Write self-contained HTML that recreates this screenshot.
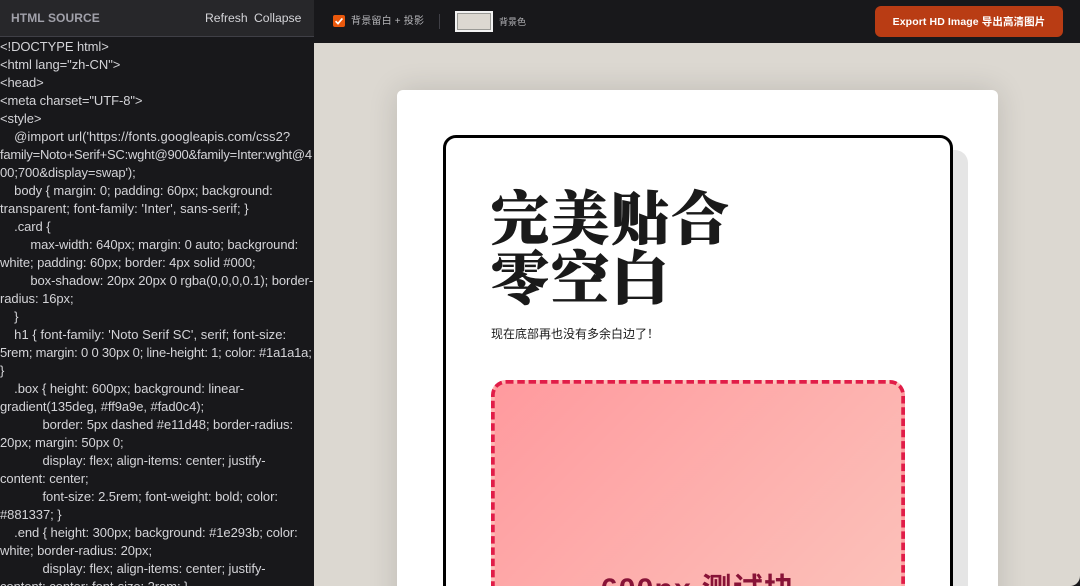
<!DOCTYPE html>
<html lang="zh-CN">
<head>
<meta charset="UTF-8">
<style>
html,body{margin:0;padding:0;width:1080px;height:586px;overflow:hidden;background:#18181b}
*{box-sizing:border-box}
body{position:relative;font-family:"Liberation Sans","Noto Sans CJK SC",sans-serif}
.abs{position:absolute}
#main{left:314px;top:43px;width:766px;height:543px;background:#dcd8d1;overflow:hidden;border-bottom-right-radius:10px}
#panelhead{left:0;top:0;width:314px;height:37px;background:#27272a;border-bottom:1px solid #3f3f46}
#code{left:0;top:37px;width:314px;height:549px;background:#18181b;overflow:hidden;margin:0;padding-top:1px;font:13px/18px "Liberation Sans","Noto Sans CJK SC",sans-serif;color:#d4d4d8;white-space:pre;letter-spacing:-.07px}
#sheet{left:83px;top:47px;width:601px;height:600px;background:#fff;border-radius:6px;box-shadow:0 0 30px rgba(0,0,0,.14)}
#inner{left:46px;top:45px;width:510px;height:600px;background:#fff;border:3px solid #000;border-radius:13px;box-shadow:15px 15px 0 rgba(0,0,0,.1)}
#h1{left:94px;top:94px;font:900 58px/60px "Noto Serif CJK SC","Liberation Serif",serif;letter-spacing:2px;color:#1a1a1a;white-space:nowrap;-webkit-text-stroke:.8px #1a1a1a}
#sub{left:94px;top:236px;font:12px/16px "Liberation Sans","Noto Sans CJK SC",sans-serif;color:#1a1a1a;white-space:nowrap}
#box{left:94px;top:290px;width:552px;height:600px;transform:scale(.75);transform-origin:0 0;border:5px dashed #e11d48;border-radius:20px;background:linear-gradient(135deg,#ff9a9e,#fad0c4)}
#boxt{left:94px;top:482px;width:414px;text-align:center;font:bold 30px/36px "Liberation Sans","Noto Sans CJK SC",sans-serif;letter-spacing:1.2px;color:#881337;white-space:nowrap}
.i8{margin-left:2px}
.t1{letter-spacing:-.22px}
.t2{letter-spacing:-.2px}
.w1{letter-spacing:.05px}
</style>
</head>
<body>
<div class="abs" id="main">
  <div class="abs" id="sheet">
    <div class="abs" id="inner"></div>
    <div class="abs" id="h1">完美贴合<br>零空白</div>
    <div class="abs" id="sub">现在底部再也没有多余白边了！</div>
    <div class="abs" id="box"></div>
    <div class="abs" id="boxt">600px 测试块</div>
  </div>
</div>

<div class="abs" id="panelhead">
  <div class="abs" style="left:11px;top:10px;font:bold 12px/16px 'Liberation Sans',sans-serif;letter-spacing:.1px;color:#a1a1aa;white-space:nowrap">HTML SOURCE</div>
  <div class="abs" style="left:205px;top:10px;font:12.2px/16px 'Liberation Sans',sans-serif;color:#d4d4d8;white-space:nowrap">Refresh</div>
  <div class="abs" style="left:254px;top:10px;font:12.2px/16px 'Liberation Sans',sans-serif;color:#d4d4d8;white-space:nowrap">Collapse</div>
</div>
<pre class="abs" id="code">&lt;!DOCTYPE html&gt;
&lt;html lang="zh-CN"&gt;
&lt;head&gt;
&lt;meta charset="UTF-8"&gt;
&lt;style&gt;
    <span class="w1">@import url('https://fonts.googleapis.com/css2?</span>
<span class="t1">family=Noto+Serif+SC:wght@900&amp;family=Inter:wght@4</span>
00;700&amp;display=swap');
    body { margin: 0; padding: 60px; background:
<span class="w1">transparent; font-family: 'Inter', sans-serif; }</span>
    .card {
        <span class="i8">max-width: 640px; margin: 0 auto; background:</span>
white; padding: 60px; border: 4px solid #000;
        <span class="i8">box-shadow: 20px 20px 0 rgba(0,0,0,0.1); border-</span>
radius: 16px;
    }
    <span class="w1">h1 { font-family: 'Noto Serif SC', serif; font-size:</span>
<span class="t2">5rem; margin: 0 0 30px 0; line-height: 1; color: #1a1a1a;</span>
}
    .box { height: 600px; background: linear-
gradient(135deg, #ff9a9e, #fad0c4);
            border: 5px dashed #e11d48; border-radius:
20px; margin: 50px 0;
            display: flex; align-items: center; justify-
content: center;
            font-size: 2.5rem; font-weight: bold; color:
#881337; }
    .end { height: 300px; background: #1e293b; color:
white; border-radius: 20px;
            display: flex; align-items: center; justify-
content: center; font-size: 2rem; }</pre>

<!-- toolbar -->
<div class="abs" style="left:333px;top:15px;width:12px;height:12px;background:#ea580c;border-radius:2px">
  <svg width="12" height="12" viewBox="0 0 12 12" style="display:block"><path d="M2.6 6.2 L5 8.6 L9.4 3.4" fill="none" stroke="#fff" stroke-width="1.7"/></svg>
</div>
<div class="abs" style="left:351px;top:14px;font:10px/14px 'Liberation Sans','Noto Sans CJK SC',sans-serif;letter-spacing:.2px;color:#b4b4b8;white-space:nowrap;transform:translateY(1px)">背景留白 + 投影</div>
<div class="abs" style="left:439px;top:14px;width:1px;height:15px;background:#3f3f46"></div>
<div class="abs" style="left:455px;top:11px;width:38px;height:21px;background:#dcd8d1;border:2px solid #f2f2f2;outline:1px solid #9a9a96;outline-offset:-3px"></div>
<div class="abs" style="left:499px;top:15px;font:9px/14px 'Liberation Sans','Noto Sans CJK SC',sans-serif;color:#b4b4b8;white-space:nowrap">背景色</div>
<div class="abs" style="left:875px;top:6px;width:188px;height:31px;background:#b93c14;border-radius:6px;text-align:center;font:bold 10.5px/32px 'Liberation Sans','Noto Sans CJK SC',sans-serif;letter-spacing:.1px;color:#fff;white-space:nowrap">Export HD Image 导出高清图片</div>
</body>
</html>
